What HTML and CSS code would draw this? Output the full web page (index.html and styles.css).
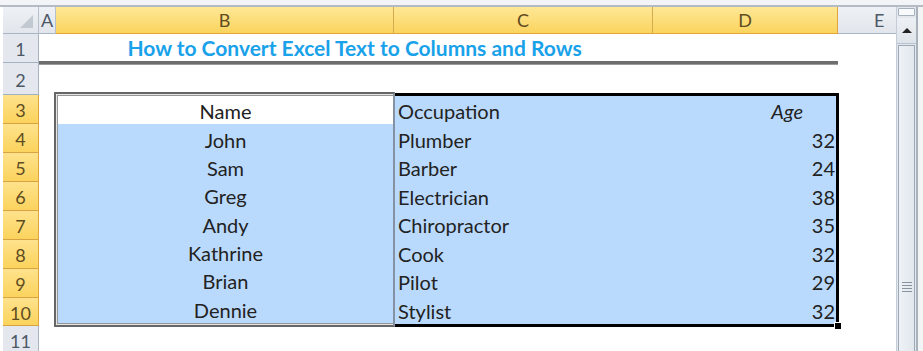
FILE: index.html
```html
<!DOCTYPE html>
<html>
<head>
<meta charset="utf-8">
<link rel="stylesheet" href="styles.css">
</head>
<body>
<div class="topbar"></div>
<div class="main">
  <div class="sheet">
    <div class="corner"><span class="tri"></span></div>
    <div class="ch">A</div>
    <div class="ch sel">B</div>
    <div class="ch sel">C</div>
    <div class="ch sel dlast">D</div>
    <div class="ch ecol">E</div>

    <div class="title">How to Convert Excel Text to Columns and Rows</div>
    <div class="rule"></div>

    <div class="rh">1</div>
    <div class="rh">2</div>
    <div class="rh sel">3</div>
    <div class="rh sel">4</div>
    <div class="rh sel">5</div>
    <div class="rh sel">6</div>
    <div class="rh sel">7</div>
    <div class="rh sel">8</div>
    <div class="rh sel">9</div>
    <div class="rh sel">10</div>
    <div class="rh">11</div>

    <div class="table">
      <div class="namebox">
        <div class="nameinner">
          <div class="nc active">Name</div>
          <div class="nc">John</div>
          <div class="nc">Sam</div>
          <div class="nc">Greg</div>
          <div class="nc">Andy</div>
          <div class="nc">Kathrine</div>
          <div class="nc">Brian</div>
          <div class="nc">Dennie</div>
        </div>
      </div>
      <div class="selbox">
        <div class="oc">Occupation</div><div class="ac hdr">Age</div>
        <div class="oc">Plumber</div><div class="ac">32</div>
        <div class="oc">Barber</div><div class="ac">24</div>
        <div class="oc">Electrician</div><div class="ac">38</div>
        <div class="oc">Chiropractor</div><div class="ac">35</div>
        <div class="oc">Cook</div><div class="ac">32</div>
        <div class="oc">Pilot</div><div class="ac">29</div>
        <div class="oc">Stylist</div><div class="ac">32</div>
        <span class="handle"></span>
      </div>
    </div>
  </div>
  <div class="scroll">
    <div class="split"><span></span></div>
    <div class="arrow"><span class="up"></span></div>
    <div class="thumb"><div class="grip"><i></i><i></i><i></i><i></i></div></div>
  </div>
  <div class="gutter"></div>
</div>
</body>
</html>
```

FILE: styles.css
```css
html, body {
  margin: 0;
  padding: 0;
}
body {
  width: 923px;
  height: 351px;
  overflow: hidden;
  background: #ffffff;
  font-family: Lato, "Open Sans", sans-serif;
  color: #222;
}
.topbar {
  height: 5px;
  background: #f2f4f7;
  border-bottom: 2px solid #b4bbc4;
}
.main {
  display: flex;
  height: 344px;
}
.sheet {
  width: 896px;
  flex: none;
  padding-left: 3px;
  box-sizing: border-box;
  display: grid;
  grid-template-columns: 36px 17px 338px 259px 185px 58px;
  grid-template-rows: 27px 29px 32px 29px 29px 29px 29px 29px 29px 29px 28px 29px;
  overflow: hidden;
  background: #fff;
  position: relative;
}
.corner {
  grid-column: 1;
  grid-row: 1;
  background: linear-gradient(#eef1f5, #e2e6ec);
  border-right: 1px solid #b6bfca;
  border-bottom: 1px solid #a9b5c2;
  display: flex;
  align-items: flex-end;
  justify-content: flex-end;
  padding: 0 5px 5px 0;
}
.tri {
  width: 0;
  height: 0;
  border-left: 13px solid transparent;
  border-bottom: 13px solid #c3c9d1;
}
.ch {
  grid-row: 1;
  display: flex;
  align-items: center;
  justify-content: center;
  font-size: 18px;
  color: #4d5866;
  background: linear-gradient(#eef1f5, #e2e6ec);
  border-right: 1px solid #b6bfca;
  border-bottom: 1px solid #a9b5c2;
}
.ch.sel {
  background: linear-gradient(#fee796, #fbd45f);
  border-right: 1px solid #d6aa4e;
  border-bottom: 1px solid #e3a43a;
  color: #5e4c22;
}
.ch.dlast {
  border-right-color: #e0a53d;
}
.ch.ecol {
  justify-content: flex-start;
  padding-left: 36px;
  border-right: none;
}
.rh {
  grid-column: 1;
  display: flex;
  align-items: center;
  justify-content: center;
  font-size: 18px;
  color: #4d5866;
  background: #e4e8ee;
  border-right: 1px solid #a8b4c2;
  border-bottom: 1px solid #a3b2c3;
  padding-top: 2px;
}
.rh.sel {
  background: linear-gradient(#fee28c, #fbd35d);
  border-right: 1px solid #e0a43a;
  border-bottom: 1px solid #d8a443;
  color: #5e4c22;
}
.title {
  grid-column: 3 / 5;
  grid-row: 2;
  display: flex;
  align-items: center;
  justify-content: center;
  font-weight: 700;
  font-size: 21px;
  color: #19a2ea;
  padding-bottom: 2px;
}
.rule {
  grid-column: 2 / 6;
  grid-row: 2;
  align-self: end;
  height: 3px;
  margin-bottom: -2px;
  background: #6e6e6e;
  border-bottom: 1px solid #9c9c9c;
}
.table {
  grid-column: 3 / 6;
  grid-row: 4 / 12;
  margin: -3px -1px -1px -2px;
  display: flex;
  font-size: 20px;
}
.namebox {
  width: 341px;
  flex: none;
  box-sizing: border-box;
  border: 2px solid #666;
  border-right: 2px solid #8492a3;
  padding: 1px 0 1px 1px;
  background: #e6e6e6;
  display: flex;
}
.nameinner {
  flex: 1;
  border: 1px solid #959595;
  border-right: none;
  display: flex;
  flex-direction: column;
}
.nc {
  flex: 1;
  display: flex;
  align-items: center;
  justify-content: center;
  background: #badafd;
  padding-top: 2px;
}
.nc.active {
  background: #fff;
}
.selbox {
  flex: 1;
  margin-top: 1px;
  border: 3px solid #000;
  border-left: none;
  background: #badafd;
  display: grid;
  grid-template-columns: 258px 1fr;
  grid-template-rows: repeat(8, 1fr);
  position: relative;
}
.oc {
  display: flex;
  align-items: center;
  padding-left: 3px;
  padding-top: 2px;
}
.ac {
  display: flex;
  align-items: center;
  justify-content: flex-end;
  padding-right: 1px;
  padding-top: 2px;
}
.ac.hdr {
  font-style: italic;
  padding-right: 33px;
}
.handle {
  position: absolute;
  right: -6px;
  bottom: -6px;
  width: 6px;
  height: 6px;
  background: #000;
  border: 1px solid #fff;
}
.scroll {
  width: 19px;
  flex: none;
  display: flex;
  flex-direction: column;
  background: #e3e8ee;
  border-left: 1px solid #c4ccd6;
}
.split {
  height: 10px;
  display: flex;
  align-items: flex-start;
  justify-content: center;
  padding-top: 1px;
}
.split span {
  width: 15px;
  height: 6px;
  background: #f7f9fb;
  border: 1px solid #a7b1bd;
  border-radius: 1px;
}
.arrow {
  height: 25px;
  display: flex;
  align-items: center;
  justify-content: center;
  background: linear-gradient(#edf0f4, #dfe4ea);
  border-bottom: 1px solid #b9c2cd;
}
.up {
  width: 0;
  height: 0;
  border-left: 5px solid transparent;
  border-right: 5px solid transparent;
  border-bottom: 5px solid #222;
}
.thumb {
  flex: 1;
  margin: 1px 1px 0 1px;
  border: 1px solid #9ea9b7;
  border-bottom: none;
  background: linear-gradient(90deg, #eef2f6, #e2e7ee);
  display: flex;
  flex-direction: column;
  align-items: center;
  padding-top: 236px;
}
.grip {
  display: flex;
  flex-direction: column;
  gap: 2px;
}
.grip i {
  display: block;
  width: 10px;
  height: 1px;
  background: #8a94a0;
}
.gutter {
  flex: 1;
  border-left: 2px solid #a9b1bb;
  background: #f3f4f6;
}
```
